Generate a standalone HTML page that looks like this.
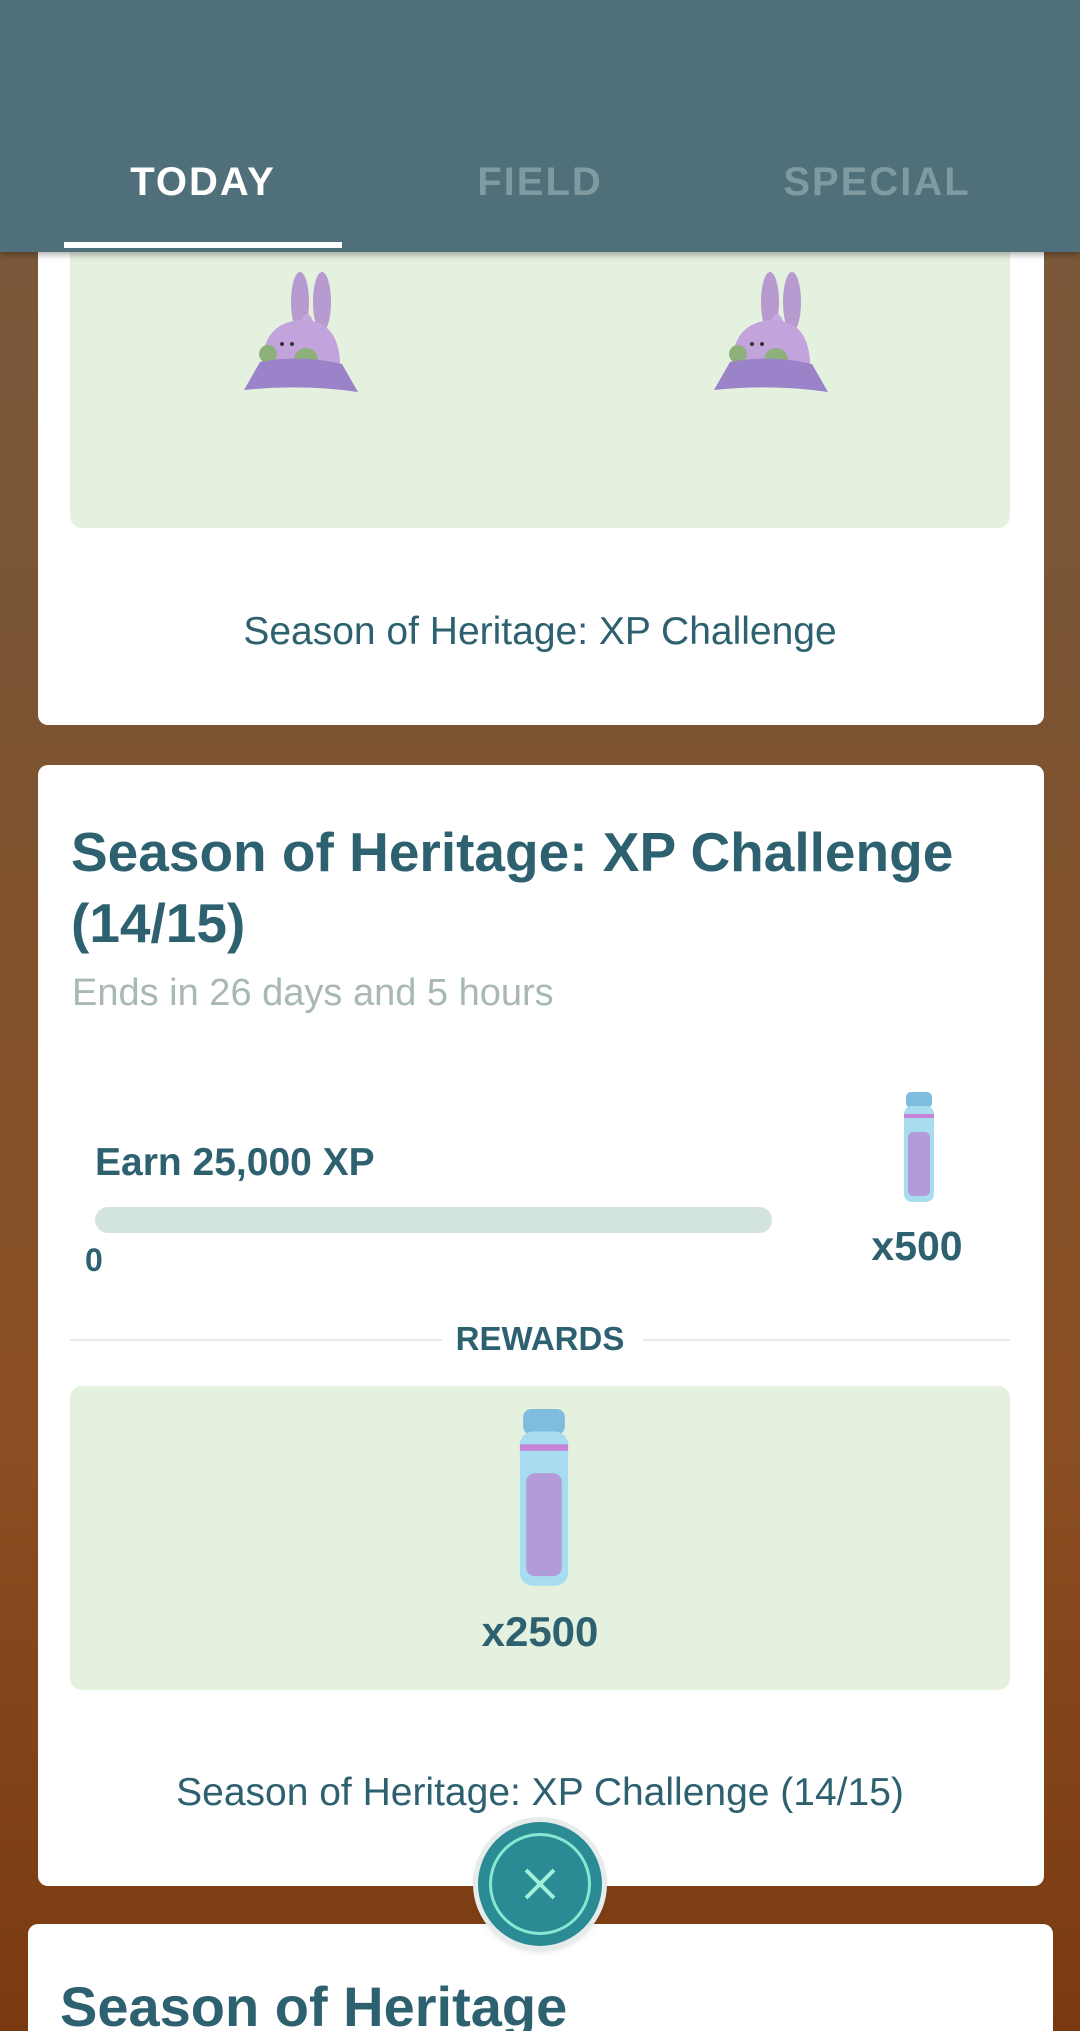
<!DOCTYPE html>
<html style="background:#7a3a10"><head><meta charset="utf-8"><style>
*{margin:0;padding:0;box-sizing:border-box}
html,body{width:1080px;height:2031px;overflow:hidden}
body{position:relative;font-family:"Liberation Sans",sans-serif;color:#2e6170;
background:linear-gradient(180deg,#7b5a3c 0%,#7a5535 30%,#80512c 45%,#8a4f22 70%,#7a3a10 100%)}
.hdr{position:absolute;left:0;top:0;width:1080px;height:252px;background:#4f707a;box-shadow:0 3px 6px rgba(0,0,0,.3);z-index:5}
.tab{position:absolute;top:160px;font-size:40px;font-weight:bold;letter-spacing:2px;transform:translateX(-50%)}
.ul{position:absolute;left:64px;top:242px;width:278px;height:6px;background:#fff}
.card{position:absolute;background:#fff;border-radius:10px}
.green{position:absolute;background:#e5f1df;border-radius:12px}
.c{position:absolute;text-align:center;transform:translateX(-50%);white-space:nowrap}
</style></head><body>
<div class="hdr">
<div class="tab" style="left:203px;color:#fff">TODAY</div>
<div class="tab" style="left:540px;color:#7f9aa0">FIELD</div>
<div class="tab" style="left:877px;color:#7f9aa0">SPECIAL</div>
<div class="ul"></div>
</div>

<div class="card" style="left:38px;top:150px;width:1006px;height:575px">
<div class="green" style="left:32px;top:80px;width:940px;height:298px"></div>
<div class="c" style="left:502px;top:460px;font-size:39px">Season of Heritage: XP Challenge</div>
</div>
<svg style="position:absolute;left:240px;top:262px" width="125" height="145" viewBox="0 0 125 145">
<g id="g"><ellipse cx="60" cy="40" rx="9" ry="30" fill="#b79ad0"/><ellipse cx="82" cy="40" rx="9" ry="30" fill="#b79ad0"/><ellipse cx="67" cy="68" rx="7" ry="16" fill="#c5a8dc"/>
<path d="M22 110 Q20 60 62 58 Q102 58 100 110Z" fill="#c2a3dc"/><circle cx="66" cy="98" r="12" fill="#8eb07a"/><circle cx="28" cy="92" r="9" fill="#8eb07a"/><circle cx="42" cy="82" r="2" fill="#333"/><circle cx="52" cy="82" r="2" fill="#333"/>
<path d="M20 100 Q60 92 102 102 L118 130 Q62 122 4 128Z" fill="#9a83c9"/></g></svg>
<svg style="position:absolute;left:710px;top:262px" width="125" height="145" viewBox="0 0 125 145"><use href="#g"/></svg>

<div class="card" style="left:38px;top:765px;width:1006px;height:1121px">
<div style="position:absolute;left:33px;top:52px;font-size:55px;font-weight:bold;line-height:71px">Season of Heritage: XP Challenge<br>(14/15)</div>
<div style="position:absolute;left:34px;top:207px;font-size:38px;color:#a8b8b5">Ends in 26 days and 5 hours</div>
<div style="position:absolute;left:57px;top:376px;font-size:39px;font-weight:bold">Earn 25,000 XP</div>
<div style="position:absolute;left:57px;top:442px;width:677px;height:26px;background:#d3e4e0;border-radius:13px"></div>
<div style="position:absolute;left:47px;top:477px;font-size:32px;font-weight:bold">0</div>
<div class="c" style="left:879px;top:458px;font-size:41px;font-weight:bold">x500</div>
<div style="position:absolute;left:32px;top:574px;width:372px;height:2px;background:#e5ecea"></div>
<div style="position:absolute;left:605px;top:574px;width:367px;height:2px;background:#e5ecea"></div>
<div class="c" style="left:502px;top:555px;font-size:33px;font-weight:bold">REWARDS</div>
<div class="green" style="left:32px;top:621px;width:940px;height:304px"></div>
<div class="c" style="left:502px;top:843px;font-size:42px;font-weight:bold">x2500</div>
<div class="c" style="left:502px;top:1006px;font-size:39px">Season of Heritage: XP Challenge (14/15)</div>
</div>
<svg style="position:absolute;left:903px;top:1092px" width="32" height="112" viewBox="0 0 32 112"><g id="b"><rect x="3" y="0" width="26" height="16" rx="5" fill="#7fbde0"/><rect x="1" y="14" width="30" height="96" rx="8" fill="#a8dcef"/><rect x="1" y="22" width="30" height="4" fill="#c783d8"/><rect x="5" y="40" width="22" height="64" rx="5" fill="#b39ad8"/></g></svg>
<svg style="position:absolute;left:518px;top:1409px" width="52" height="180" viewBox="0 0 32 112"><use href="#b"/></svg>

<div class="card" style="left:28px;top:1924px;width:1025px;height:107px;border-radius:10px 10px 0 0">
<div style="position:absolute;left:32px;top:50px;font-size:56px;font-weight:bold">Season of Heritage</div>
</div>
<div style="position:absolute;left:478px;top:1822px;width:124px;height:124px;border-radius:50%;background:#2b8b95;box-shadow:0 0 0 5px #e6ecec,0 3px 8px rgba(0,0,0,.3)">
<div style="position:absolute;left:11px;top:11px;width:102px;height:102px;border-radius:50%;border:3px solid #86e8cf"></div>
<svg style="position:absolute;left:44px;top:44px" width="36" height="36"><path d="M4 4L32 32M32 4L4 32" stroke="#9ef0d8" stroke-width="4"/></svg>
</div>
</body></html>
